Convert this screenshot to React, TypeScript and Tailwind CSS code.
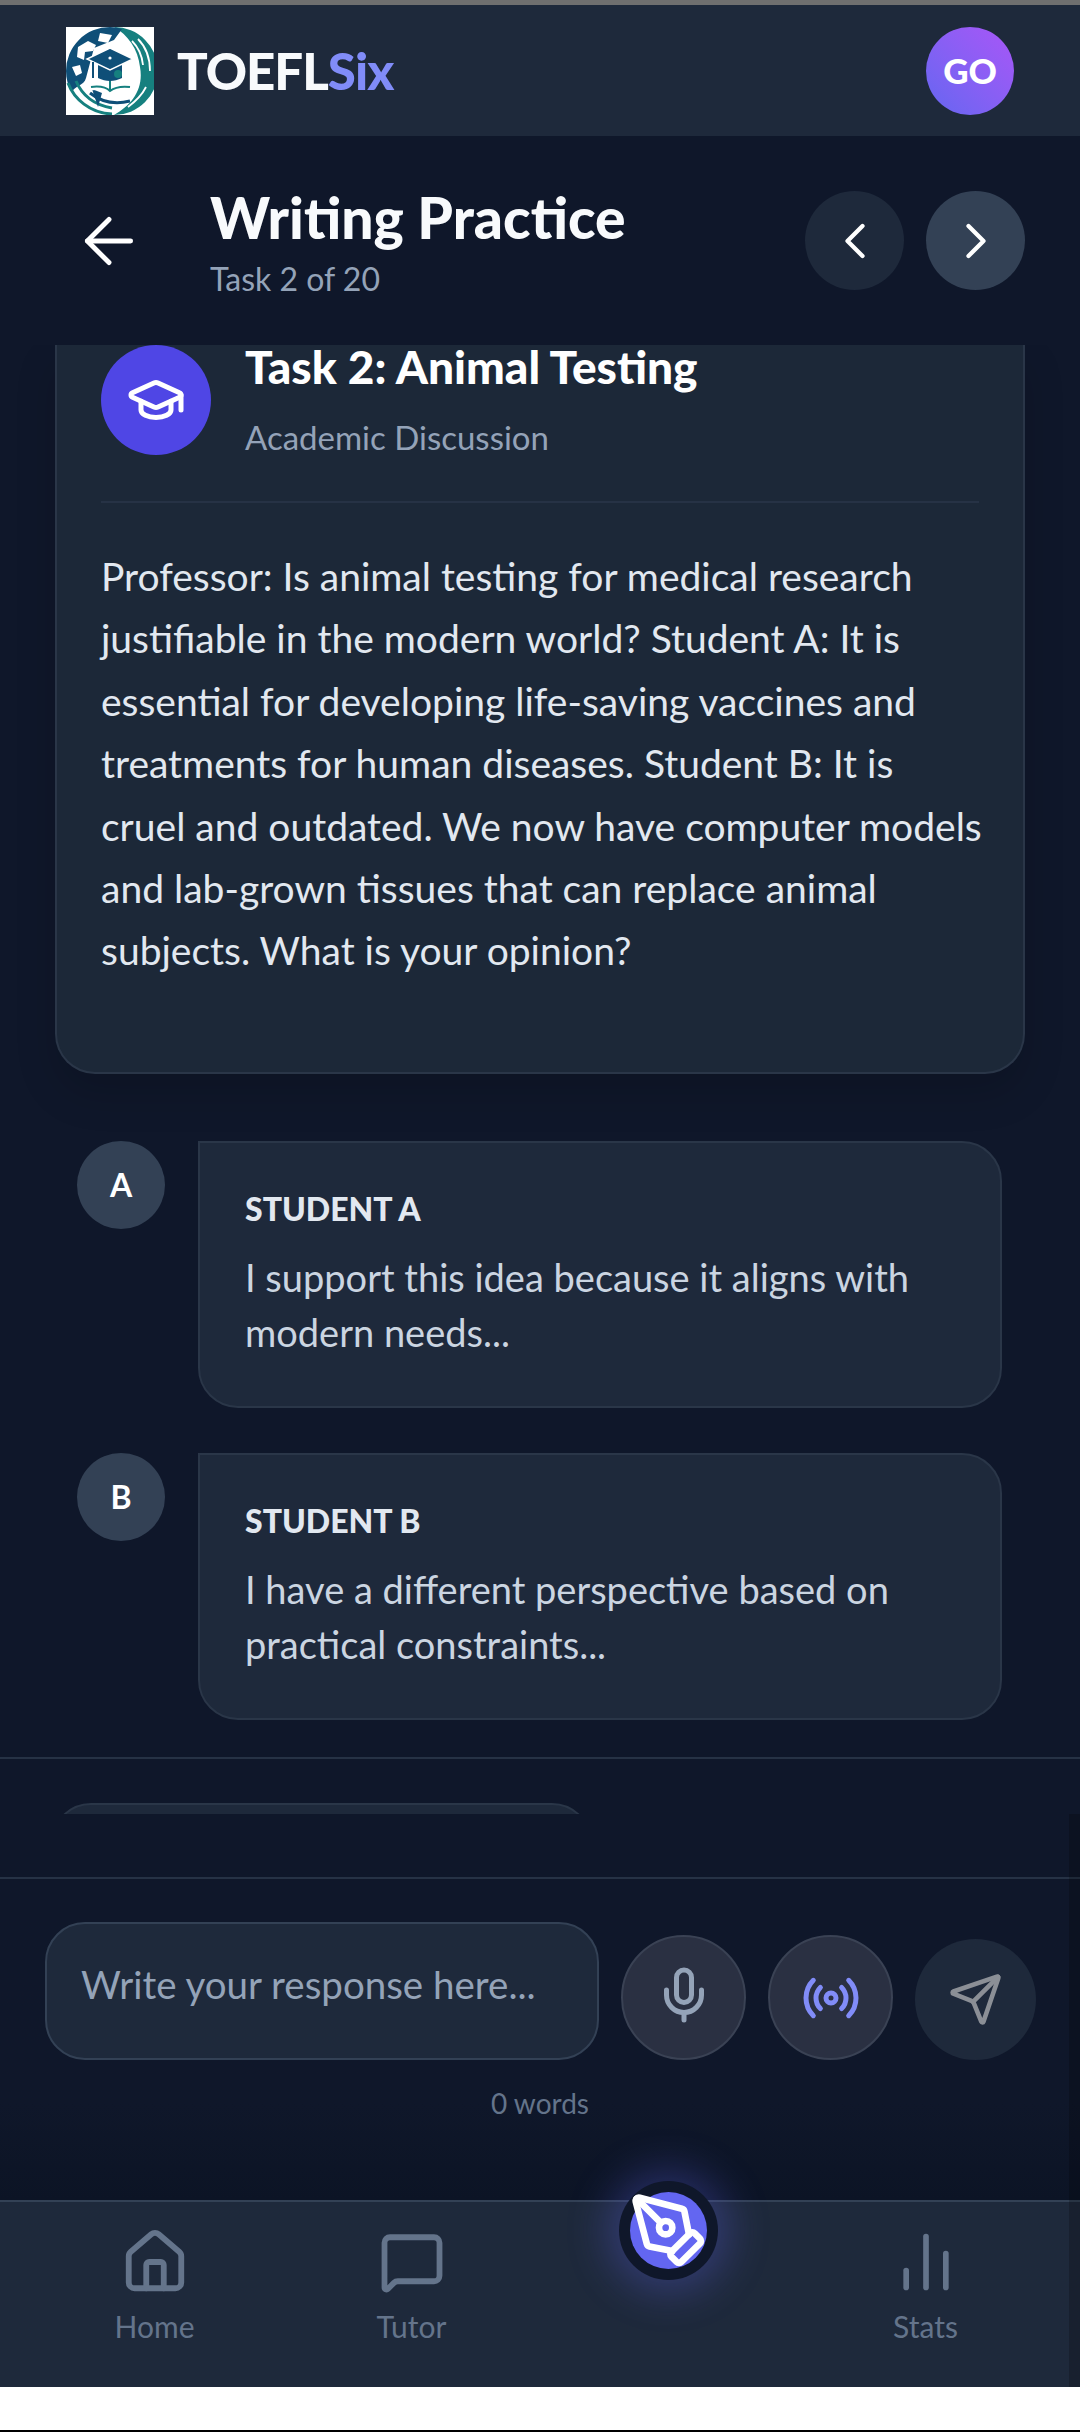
import { ArrowLeft, ChevronLeft, ChevronRight, ChartNoAxesColumn, GraduationCap, House, MessageSquare, Mic, PenTool, Radio, Send } from "lucide-react";

const PROMPT_LINES = [
  "Professor: Is animal testing for medical research",
  "justifiable in the modern world? Student A: It is",
  "essential for developing life-saving vaccines and",
  "treatments for human diseases. Student B: It is",
  "cruel and outdated. We now have computer models",
  "and lab-grown tissues that can replace animal",
  "subjects. What is your opinion?",
];

const STUDENTS = [
  { id: "A", lines: ["I support this idea because it aligns with", "modern needs..."] },
  { id: "B", lines: ["I have a different perspective based on", "practical constraints..."] },
];

function Logo() {
  return (
    <svg viewBox="0 0 88 88" className="h-[88px] w-[88px] shrink-0 bg-white">
      <circle cx="44" cy="44" r="44" fill="#ffffff" />
      {/* teal right side, navy left side */}
      <path d="M48 0a44 44 0 0 1 0 88c18-10 30-26 26-48C72 22 62 8 48 0z" fill="#16807f" />
      <path d="M44 0A44 44 0 0 0 0 44c0 8 2 15 6 21 2-6 12-6 14-14l8-30 20-8 8-11a44 44 0 0 0-12-2z" fill="#0f4f78" />
      <path d="M12 20l10-6 8 4-3 6-8 1-1 8-7-3zM6 40l8-2 2 8-6 3zM34 6l12 2-4 8-10-2z" fill="#ffffff" />
      <path d="M2 56c6 16 22 30 44 31M10 54c6 14 18 24 36 27" stroke="#16807f" strokeWidth="3" fill="none" />
      <path d="M24 66c10 8 24 12 40 8" stroke="#0f4f78" strokeWidth="3" fill="none" />
      <path d="M72 12c8 8 12 20 12 32M66 14c6 6 10 14 11 24M80 60c-4 8-10 14-18 20" stroke="#ffffff" strokeWidth="1.8" fill="none" />
      <path d="M26 62l6 18 4-14z" fill="#0f4f78" />
      {/* book */}
      <path d="M22 44v20c10-2 18-1 22 4 5-5 13-7 24-5V44z" fill="#ffffff" />
      <path d="M25 60c8-1 15 0 19 4 5-4 11-5 20-4M44 50v14" stroke="#16807f" strokeWidth="2" fill="none" />
      {/* cap */}
      <path d="M32 38v13c8 4 16 4 24 0V38z" fill="#0f4f78" />
      <path d="M44 21l23 11-23 11-23-11z" fill="#0f4f78" stroke="#ffffff" strokeWidth="1.5" />
      <circle cx="44" cy="31" r="1.6" fill="#ffffff" />
      <path d="M27 35v16" stroke="#0f4f78" strokeWidth="2" />
      <circle cx="52" cy="47" r="4" fill="#16807f" />
    </svg>
  );
}

function StudentRow({ id, lines }: { id: string; lines: string[] }) {
  return (
    <div className="flex items-start gap-[33px] pl-[77px] pr-[78px]">
      <div className="flex h-[88px] w-[88px] shrink-0 items-center justify-center rounded-full bg-[#334155] text-[32px] font-bold text-white">
        {id}
      </div>
      <div className="h-[267px] flex-1 rounded-[40px] rounded-tl-none border-2 border-[#2a3648] bg-[#1e293b] px-[45px] pt-[46px]">
        <div className="text-[32px] leading-[40px] font-black text-[#e2e8f0]">STUDENT {id}</div>
        <p className="mt-[21px] text-[38px] leading-[55px] text-[#cbd5e1]">
          {lines.map((line) => (
            <span key={line} className="block whitespace-nowrap">{line}</span>
          ))}
        </p>
      </div>
    </div>
  );
}

function NavItem({ icon, label }: { icon: React.ReactNode; label: string }) {
  return (
    <div className="flex flex-col items-center text-[#64748b]">
      <div className="flex h-[72px] items-center justify-center">{icon}</div>
      <span className="mt-[8px] text-[30px] leading-[40px] text-[#64748b]">{label}</span>
    </div>
  );
}

export default function App() {
  return (
    <div className="relative flex h-[2432px] w-[1080px] flex-col overflow-hidden bg-white font-['Lato',sans-serif]">
      <div className="h-[5px] shrink-0 bg-[#6f6f6f]" />

      <header className="flex h-[131px] shrink-0 items-center justify-between bg-[#1e293b] px-[66px]">
        <div className="flex items-center gap-[23px]">
          <Logo />
          <div className="pt-[2px] text-[51px] font-black tracking-[-1px] text-[#f8fafc]">
            TOEFL<span className="text-[#818cf8]">Six</span>
          </div>
        </div>
        <div className="flex h-[88px] w-[88px] items-center justify-center rounded-full bg-gradient-to-tr from-[#6366f1] to-[#a855f7] text-[35px] font-black text-white">
          GO
        </div>
      </header>

      <main className="flex h-[2064px] shrink-0 flex-col bg-[#0f172a]">
        <div className="flex h-[209px] shrink-0 items-center pl-[72px] pr-[55px]">
          <ArrowLeft size={74} color="#ffffff" strokeWidth={1.6} className="shrink-0" />
          <div className="ml-[64px] flex-1 pt-[4px]">
            <h1 className="text-[57px] leading-[60px] font-black text-[#f8fafc]">Writing Practice</h1>
            <div className="mt-[12px] text-[32px] leading-[40px] text-[#94a3b8]">Task 2 of 20</div>
          </div>
          <div className="flex gap-[22px]">
            <div className="flex h-[99px] w-[99px] items-center justify-center rounded-full bg-[#1e293b]">
              <ChevronLeft size={60} color="#ffffff" strokeWidth={1.7} />
            </div>
            <div className="flex h-[99px] w-[99px] items-center justify-center rounded-full bg-[#334155]">
              <ChevronRight size={60} color="#ffffff" strokeWidth={1.7} />
            </div>
          </div>
        </div>

        {/* scrolled list, top of the card sits under the header */}
        <div className="h-[1469px] shrink-0 overflow-hidden">
          <div className="mx-[55px] h-[729px] rounded-b-[40px] border-x-2 border-b-2 border-[#2a3648] bg-[#1c2838] px-[44px] shadow-[0_20px_40px_rgba(0,0,0,0.15)]">
            <div className="flex items-start gap-[34px] border-b-2 border-[#263245] pb-[44px]">
              <div className="flex h-[110px] w-[110px] shrink-0 items-center justify-center rounded-full bg-[#4f46e5]">
                <GraduationCap size={60} color="#ffffff" strokeWidth={2} />
              </div>
              <div>
                <div className="text-[46px] leading-[44px] font-black text-white">Task 2: Animal Testing</div>
                <div className="mt-[28px] text-[33px] leading-[40px] text-[#94a3b8]">Academic Discussion</div>
              </div>
            </div>
            <p className="mt-[42px] text-[39px] leading-[62.4px] text-[#e2e8f0]">
              {PROMPT_LINES.map((line) => (
                <span key={line} className="block whitespace-nowrap">{line}</span>
              ))}
            </p>
          </div>

          <div className="mt-[67px] flex flex-col gap-[45px]">
            {STUDENTS.map((s) => (
              <StudentRow key={s.id} id={s.id} lines={s.lines} />
            ))}
          </div>

          <div className="mt-[37px] h-[2px] bg-[#263245]" />
          <div className="ml-[51px] mt-[44px] h-[60px] w-[541px] rounded-t-[40px] border-2 border-[#2a3648] bg-[#1e293b]" />
        </div>

        <div className="mt-[63px] min-h-0 flex-1 border-t-2 border-[#263245] bg-gradient-to-b from-[#0f172a] from-[70%] to-[#0c1425] pl-[45px]">
          <div className="flex items-end pt-[43px]">
            <div className="flex h-[138px] w-[554px] items-center rounded-[40px] border-2 border-[#334155] bg-[#1e293b] px-[34px] pb-[12px] text-[38.5px] text-[#94a3b8]">
              Write your response here...
            </div>
            <div className="ml-[22px] flex h-[125px] w-[125px] items-center justify-center rounded-full border-2 border-[#3a4254] bg-[#2a3042] pb-[6px]">
              <Mic size={60} color="#94a3b8" strokeWidth={2} />
            </div>
            <div className="ml-[22px] flex h-[125px] w-[125px] items-center justify-center rounded-full border-2 border-[#3a4254] bg-[#2a3042]">
              <Radio size={60} color="#818cf8" strokeWidth={2} />
            </div>
            <div className="ml-[22px] flex h-[121px] w-[121px] items-center justify-center rounded-full bg-[#1e293b]">
              <Send size={55} color="#8b8f96" strokeWidth={2} />
            </div>
          </div>
          <div className="mt-[28px] pr-[45px] text-center text-[28px] leading-[30px] text-[#64748b]">0 words</div>
        </div>
      </main>

      <nav className="relative h-[187px] shrink-0 border-t-2 border-[#334155] bg-[#1e293b] px-[26px] pt-[24px]">
        <div className="grid grid-cols-4">
          <NavItem icon={<House size={70} strokeWidth={2} />} label="Home" />
          <NavItem icon={<MessageSquare size={66} strokeWidth={2.1} />} label="Tutor" />
          <div />
          <NavItem icon={<ChartNoAxesColumn size={68} strokeWidth={2} />} label="Stats" />
        </div>
        <div className="absolute left-[619px] top-[-21px] flex h-[99px] w-[99px] items-center justify-center rounded-full bg-[#0f172a] shadow-[0_0_40px_12px_rgba(99,102,241,0.3)]">
          <div className="flex h-[77px] w-[77px] items-center justify-center rounded-full bg-[#6366f1]">
            <PenTool size={80} color="#ffffff" strokeWidth={2} className="shrink-0" />
          </div>
        </div>
      </nav>

      <div className="flex-1 border-b-2 border-black bg-white" />

      {/* dark strip down the right edge */}
      <div className="absolute right-0 top-[1814px] h-[573px] w-[11px] bg-black/20" />
    </div>
  );
}
